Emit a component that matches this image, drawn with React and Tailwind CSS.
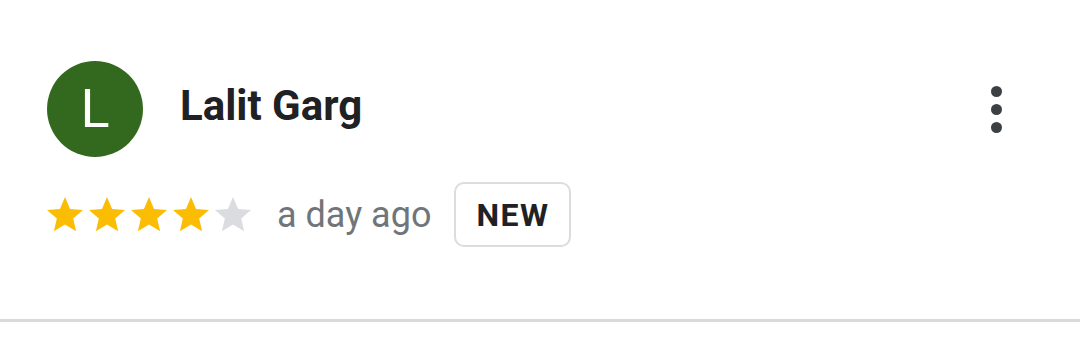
import React from "react";

function Star({ color }) {
  return (
    <svg width="42" height="42" viewBox="0.33 0.33 23.33 23.33" className="block">
      <path
        fill={color}
        d="M12 17.27L18.18 21l-1.64-7.03L22 9.24l-7.19-.61L12 2 9.19 8.63 2 9.24l5.46 4.73L5.82 21z"
      />
    </svg>
  );
}

export default function App() {
  return (
    <div
      className="w-[1080px] h-[352px] bg-white flex flex-col"
      style={{ fontFamily: "Roboto, 'Noto Sans', sans-serif" }}
    >
      <div className="flex-1 flex flex-col pl-[47px] pr-[78px] pt-[61px]">
        <div className="flex items-center">
          <div className="w-[96px] h-[96px] rounded-full bg-[#33691e] flex items-center justify-center text-white text-[54px] font-normal leading-none">
            L
          </div>
          <div className="ml-[37px] text-[42px] font-bold text-[#202124] leading-none pb-[6px]">
            Lalit Garg
          </div>
          <div className="ml-auto flex flex-col gap-[7px] items-center">
            <span className="w-[11px] h-[11px] rounded-full bg-[#3c4043]" />
            <span className="w-[11px] h-[11px] rounded-full bg-[#3c4043]" />
            <span className="w-[11px] h-[11px] rounded-full bg-[#3c4043]" />
          </div>
        </div>
        <div className="flex items-center mt-[25px]">
          <div className="flex ml-[-3px]">
            <Star color="#fbbc04" />
            <Star color="#fbbc04" />
            <Star color="#fbbc04" />
            <Star color="#fbbc04" />
            <Star color="#dadce0" />
          </div>
          <span className="ml-[23px] text-[36px] text-[#70757a] leading-none">a day ago</span>
          <span className="ml-[23px] h-[65px] w-[117px] border-2 border-[#dadce0] rounded-[10px] flex items-center justify-center text-[32px] font-bold tracking-[1.5px] text-[#202124] leading-none">
            NEW
          </span>
        </div>
      </div>
      <div className="h-[3px] bg-[#dadada] mb-[30px]" />
    </div>
  );
}
